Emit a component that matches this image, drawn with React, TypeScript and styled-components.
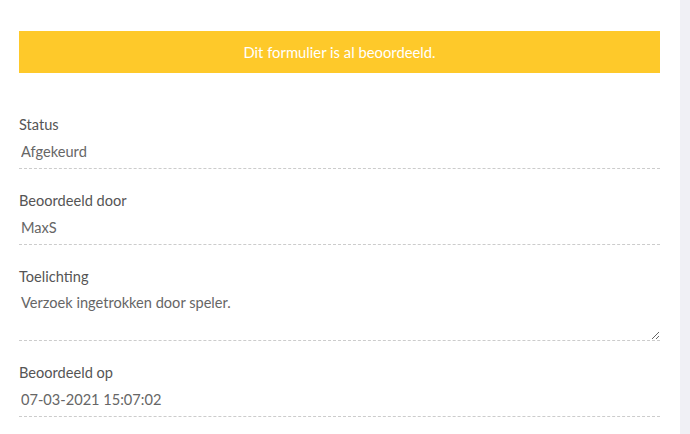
import React from 'react';
import styled, { createGlobalStyle } from 'styled-components';

const GlobalStyle = createGlobalStyle`
    body {
        margin: 0;
        background: #f0f0f5;
        font-family: Lato, "Open Sans", sans-serif;
    }
`;

const Page = styled.div`
    display: flex;
    height: 434px;
`;

const Panel = styled.div`
    width: 680px;
    background: #fff;
    padding: 31px 20px 0 19px;
    box-sizing: border-box;
`;

const Notice = styled.div`
    height: 42px;
    background: #fec92a;
    color: #fff;
    font-size: 14.8px;
    display: flex;
    align-items: center;
    justify-content: center;
    margin-bottom: 42px;
`;

const Form = styled.div`
    display: flex;
    flex-direction: column;
    gap: 22px;
`;

const Field = styled.div`
    display: flex;
    flex-direction: column;
`;

const Label = styled.label`
    font-size: 14.6px;
    line-height: 20px;
    color: #555;
`;

const Input = styled.input`
    height: 34px;
    padding: 0 2px;
    border: none;
    border-bottom: 1px dashed #ccc;
    font-family: inherit;
    font-size: 14.6px;
    color: #666;
    background: transparent;
    outline: none;
    box-sizing: border-box;
`;

const TextArea = styled.textarea`
    height: 54px;
    padding: 6px 2px 0;
    border: none;
    border-bottom: 1px dashed #ccc;
    font-family: inherit;
    font-size: 14.6px;
    line-height: 20px;
    color: #666;
    background: transparent;
    outline: none;
    box-sizing: border-box;
`;

const fields = [
    { label: 'Status', value: 'Afgekeurd' },
    { label: 'Beoordeeld door', value: 'MaxS' },
    { label: 'Toelichting', value: 'Verzoek ingetrokken door speler.', multiline: true },
    { label: 'Beoordeeld op', value: '07-03-2021 15:07:02' },
];

const App = () => (
    <Page>
        <GlobalStyle />
        <Panel>
            <Notice>Dit formulier is al beoordeeld.</Notice>
            <Form>
                {fields.map(f => (
                    <Field key={f.label}>
                        <Label>{f.label}</Label>
                        {f.multiline
                            ? <TextArea readOnly defaultValue={f.value} />
                            : <Input readOnly defaultValue={f.value} />}
                    </Field>
                ))}
            </Form>
        </Panel>
    </Page>
);

export default App;
